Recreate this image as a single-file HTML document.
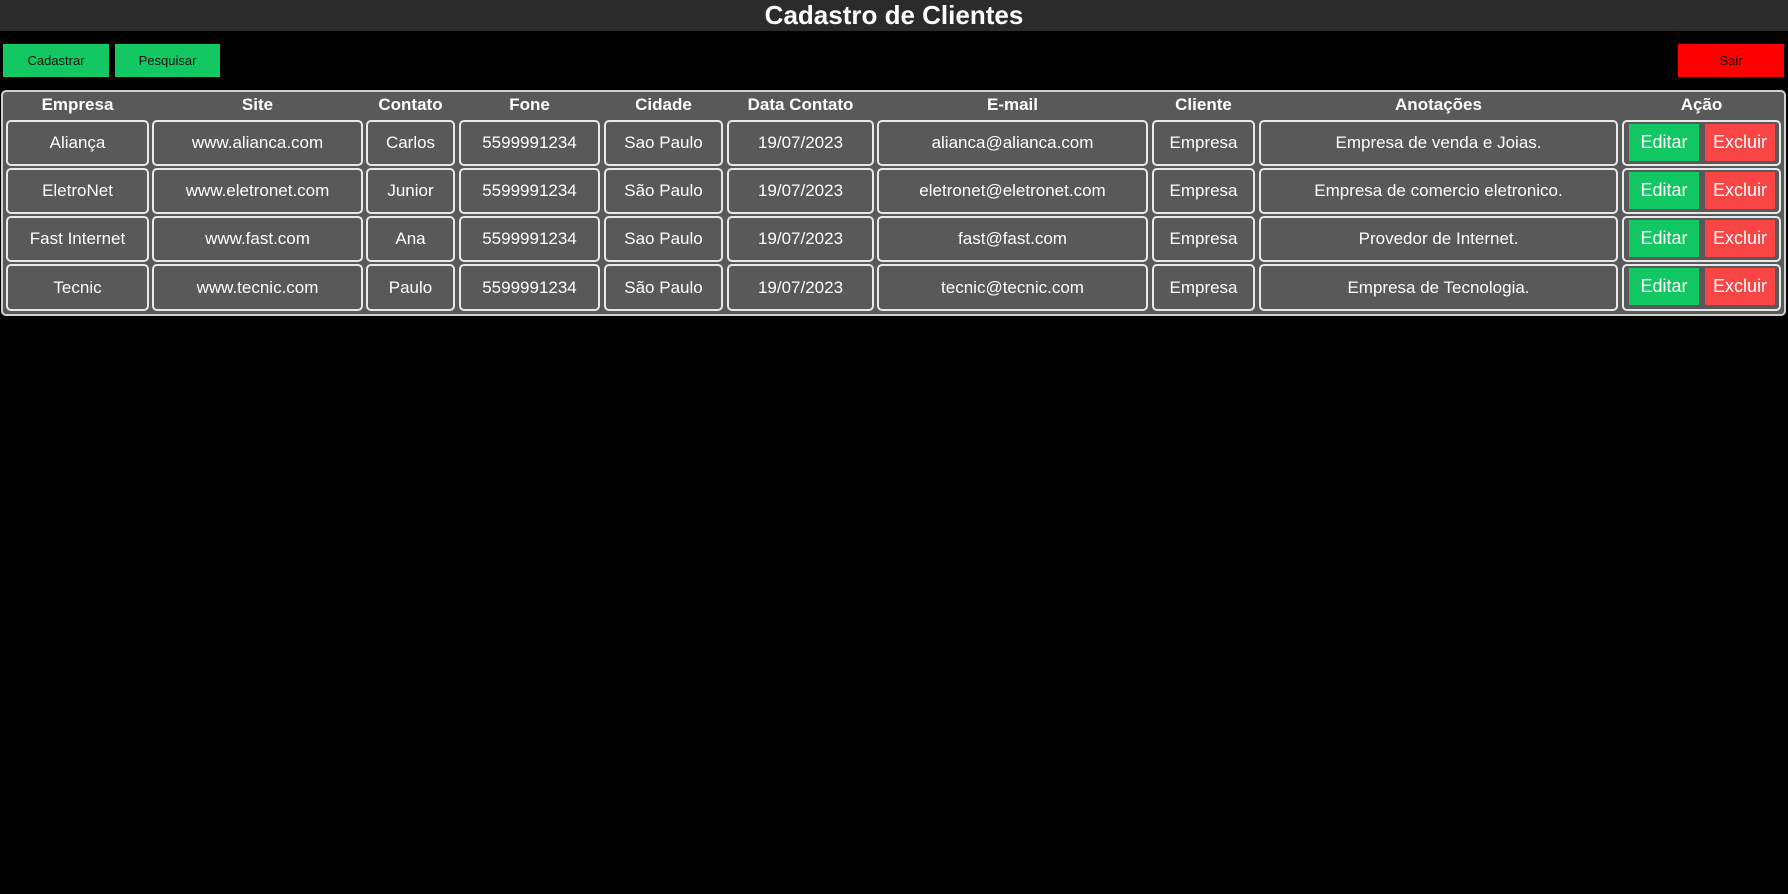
<!DOCTYPE html>
<html><head><meta charset="utf-8"><style>
*{box-sizing:border-box;margin:0;padding:0}
body{width:1788px;height:894px;background:#000;font-family:"Liberation Sans",Arial,sans-serif;position:relative;overflow:hidden}
.hdr{position:absolute;left:0;top:0;width:1788px;height:31px;background:#2b2b2b;color:#fff;font-weight:bold;font-size:26px;text-align:center;line-height:31px}
.btn{position:absolute;top:44px;height:33px;font-size:13px;line-height:33px;text-align:center;color:#111}
.tbl{position:absolute;left:1px;top:90px;width:1785px;height:226px;background:#595959;border:2px solid #d0d0d0;border-radius:5px}
.th{position:absolute;top:94px;height:22px;color:#fff;font-weight:bold;font-size:17px;text-align:center;line-height:22px}
.c{position:absolute;border:2px solid #e8e8e8;border-radius:5px;color:#fff;font-size:17px;text-align:center;display:flex;align-items:center;justify-content:center;white-space:nowrap}
.b{position:absolute;height:37px;color:#fff;font-size:18px;line-height:37px;text-align:center}
</style></head><body>
<div class="hdr">Cadastro de Clientes</div>
<div class="btn" style="left:3px;width:106px;background:#12c862">Cadastrar</div>
<div class="btn" style="left:115px;width:105px;background:#12c862">Pesquisar</div>
<div class="btn" style="left:1678px;width:106px;background:#ff0000">Sair</div>
<div class="tbl"></div>
<div id="g"></div>
<script>
var cols=[[6,149],[152,363],[366,455],[459,600],[604,723],[727,874],[877,1148],[1152,1255],[1259,1618],[1622,1781]];
var heads=["Empresa","Site","Contato","Fone","Cidade","Data Contato","E-mail","Cliente","Anotações","Ação"];
var rows=[[120,166],[168,214],[216,262],[264,311]];
var data=[
["Aliança","www.alianca.com","Carlos","5599991234","Sao Paulo","19/07/2023","alianca@alianca.com","Empresa","Empresa de venda e Joias."],
["EletroNet","www.eletronet.com","Junior","5599991234","São Paulo","19/07/2023","eletronet@eletronet.com","Empresa","Empresa de comercio eletronico."],
["Fast Internet","www.fast.com","Ana","5599991234","Sao Paulo","19/07/2023","fast@fast.com","Empresa","Provedor de Internet."],
["Tecnic","www.tecnic.com","Paulo","5599991234","São Paulo","19/07/2023","tecnic@tecnic.com","Empresa","Empresa de Tecnologia."]];
var h="";
cols.forEach(function(c,i){h+='<div class="th" style="left:'+c[0]+'px;width:'+(c[1]-c[0])+'px">'+heads[i]+'</div>';});
rows.forEach(function(r,j){
cols.forEach(function(c,i){
h+='<div class="c" style="left:'+c[0]+'px;top:'+r[0]+'px;width:'+(c[1]-c[0])+'px;height:'+(r[1]-r[0])+'px">'+(i<9?data[j][i]:'')+'</div>';});
h+='<div class="b" style="left:1629px;top:'+(r[0]+4)+'px;width:70px;background:#12c862">Editar</div>';
h+='<div class="b" style="left:1705px;top:'+(r[0]+4)+'px;width:70px;background:#fa4545">Excluir</div>';
});
document.getElementById('g').innerHTML=h;
</script>
</body></html>
